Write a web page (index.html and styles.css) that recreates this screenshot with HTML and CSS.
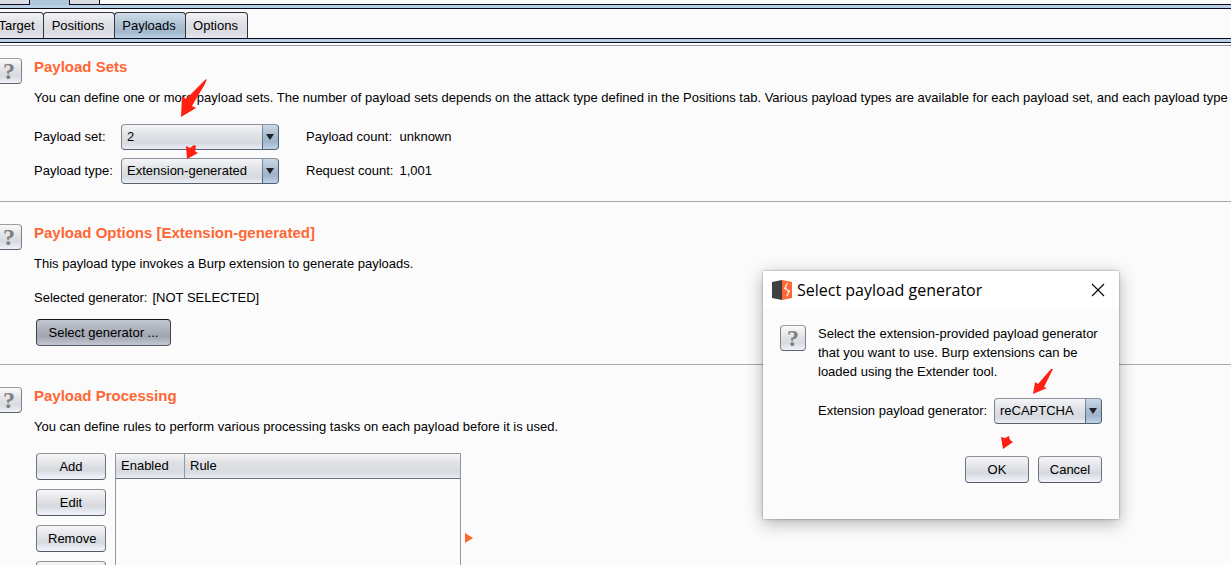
FILE: index.html
```
<!DOCTYPE html>
<html lang="en">
<head>
  <meta charset="UTF-8">
  <title>Intruder - Payloads</title>
  <link rel="stylesheet" href="styles.css">
</head>
<body>
  <div class="parent-tabs">
    <span class="parent-tab"></span>
    <span class="parent-tab wide active"></span>
    <span class="parent-tab"></span>
  </div>
  <div class="tab-bar"></div>

  <nav class="tabs">
    <button class="tab">Target</button>
    <button class="tab">Positions</button>
    <button class="tab active">Payloads</button>
    <button class="tab">Options</button>
  </nav>
  <div class="tab-bar"></div>

  <main>
    <section class="panel">
      <button class="help">?</button>
      <div class="panel-body">
        <h2>Payload Sets</h2>
        <p class="intro">You can define one or more payload sets. The number of payload sets depends on the attack type defined in the Positions tab. Various payload types are available for each payload set, and each payload type</p>
        <div class="form">
          <label for="payloadSet">Payload set:</label>
          <span class="combo"><select id="payloadSet"><option>1</option><option selected>2</option></select></span>
          <span class="count">Payload count:</span>
          <span>unknown</span>
          <label for="payloadType">Payload type:</label>
          <span class="combo"><select id="payloadType"><option>Extension-generated</option></select></span>
          <span class="count">Request count:</span>
          <span>1,001</span>
        </div>
      </div>
    </section>

    <section class="panel">
      <button class="help">?</button>
      <div class="panel-body">
        <h2>Payload Options [Extension-generated]</h2>
        <p class="intro">This payload type invokes a Burp extension to generate payloads.</p>
        <p class="selected"><span>Selected generator:</span><span>[NOT SELECTED]</span></p>
        <button class="btn pressed">Select generator ...</button>
      </div>
    </section>

    <section class="panel">
      <button class="help">?</button>
      <div class="panel-body">
        <h2>Payload Processing</h2>
        <p class="intro">You can define rules to perform various processing tasks on each payload before it is used.</p>
        <div class="rules">
          <div class="rule-buttons">
            <button class="btn">Add</button>
            <button class="btn">Edit</button>
            <button class="btn">Remove</button>
            <button class="btn" aria-label="Up"></button>
          </div>
          <div class="rule-box">
            <table class="rule-table">
              <thead>
                <tr><th class="enabled">Enabled</th><th>Rule</th></tr>
              </thead>
            </table>
          </div>
          <svg class="marker" width="8" height="10" viewBox="0 0 8 10"><path d="M0 0L8 5L0 10Z" fill="#ff6633"/></svg>
        </div>
      </div>
    </section>
  </main>

  <dialog class="dialog" open aria-labelledby="dialogTitle">
    <header class="dialog-title">
      <svg width="20" height="20" viewBox="0 0 20 20">
        <path d="M0 2L10 0V20L0 18Z" fill="#404040"/>
        <path d="M10 0L20 2V18L10 20Z" fill="#ff6633"/>
        <path d="M15.500 3L12.500 8.500L17.500 11L14.500 16.500" fill="none" stroke="#ffe8df" stroke-width="1.300"/>
        <path d="M12.500 8.500L15 8M17.500 11L15 11.500" fill="none" stroke="#ffe8df" stroke-width="1"/>
      </svg>
      <h1 id="dialogTitle">Select payload generator</h1>
      <button class="close" aria-label="Close">
        <svg width="12" height="12" viewBox="0 0 12 12"><path d="M0 0L12 12M12 0L0 12" stroke="#000" stroke-width="1.100"/></svg>
      </button>
    </header>
    <div class="dialog-body">
      <button class="help">?</button>
      <div class="dialog-content">
        <p>Select the extension-provided payload generator that you want to use. Burp extensions can be loaded using the Extender tool.</p>
        <div class="dialog-field">
          <label for="generator">Extension payload generator:</label>
          <span class="combo"><select id="generator"><option>reCAPTCHA</option></select></span>
        </div>
        <div class="dialog-actions">
          <button class="btn">OK</button>
          <button class="btn">Cancel</button>
        </div>
      </div>
    </div>
  </dialog>

  <!-- red pointer arrows -->
  <svg class="arrows" width="1231" height="565" viewBox="0 0 1231 565" fill="#ff2012">
    <path d="M205 80L207 79L205 84L192 106L196 108L181 117L182 96L186 99Z"/>
    <path d="M186 146L190 148L194 145L196 146L195 151L198 153L187 159Z"/>
    <path d="M1051 369L1053 369L1044 387L1047 388L1033 394L1035 382L1038 384Z"/>
    <path d="M1001 437L1005 438L1009 436L1010 440L1013 442L1003 449Z"/>
  </svg>
</body>
</html>
```

FILE: styles.css
```
* {
  box-sizing: border-box;
}
body {
  margin: 0;
  height: 100vh;
  overflow: hidden;
  position: relative;
  font-family: "Liberation Sans", Arial, sans-serif;
  font-size: 13px;
  line-height: 20px;
  color: #000;
  background: #fbfbfb;
}
button, select {
  font: inherit;
  color: inherit;
}
h1, h2, p {
  margin: 0;
}

/* tabs */
.parent-tabs {
  display: flex;
  height: 5px;
  margin-bottom: -1px;
}
.parent-tab {
  width: 30px;
  background: #dcdee3;
  border-right: 1px solid #0a0a1e;
  border-bottom: 1px solid #0a0a1e;
}
.parent-tab.wide {
  width: 40px;
}
.parent-tab.active {
  position: relative;
  border-bottom: 0;
  background: #b0c6da;
}
.tab-bar {
  height: 5px;
  border: solid #0a0a1e;
  border-width: 1px 0;
  background: #b8cfe5;
}
.tabs {
  display: flex;
  height: 29px;
  padding-top: 3px;
}
.tab {
  padding: 0 2px 0 0;
  width: 72px;
  margin-left: -1px;
  border: 1px solid #33343f;
  border-bottom: 0;
  border-radius: 4px 4px 0 0;
  background: linear-gradient(#f2f3f5, #dfe1e5 40%, #d9dbe1 80%, #e6e8ee);
}
.tab:first-child {
  width: 53px;
  margin-left: -9px;
}
.tab:last-child {
  width: 63px;
}
.tab.active {
  background: linear-gradient(#d0dde8, #aec2d4 45%, #a3b8cc 75%, #b8cfe5);
}

/* panels */
main {
  margin-top: 2px;
  border-top: 1px solid #9297a1;
}
.panel {
  display: flex;
  gap: 12px;
  padding: 21px 0 18px;
  border-bottom: 1px solid #a3a8b0;
}
.panel:first-child {
  padding: 11px 0 17px;
}
.panel:last-child {
  border-bottom: 0;
}
.help {
  flex: none;
  width: 26px;
  height: 26px;
  margin-top: 1px;
  padding: 0;
  border: 1px solid #85888f;
  border-color: #9a9da3 #7d8087 #5f636b;
  border-radius: 4px;
  background: linear-gradient(#fafafa, #e0e2e5 45%, #d7dae0 70%, #f0f2f8);
  font-family: "Liberation Serif", serif;
  font-size: 24px;
  font-weight: bold;
  line-height: 24px;
  color: #808080;
}
.panel > .help {
  margin-left: -4px;
}
.panel-body {
  flex: 1;
  min-width: 0;
}
h2 {
  font-size: 15px;
  color: #ff6633;
}
.intro {
  margin-top: 11px;
  white-space: nowrap;
}
.form {
  display: grid;
  grid-template-columns: 79px 158px auto 1fr;
  column-gap: 8px;
  row-gap: 8px;
  align-items: center;
  margin-top: 16px;
}
.count {
  margin: 0 -2px 0 19px;
}
.selected {
  display: flex;
  gap: 5px;
  margin-top: 14px;
}

/* controls */
.combo {
  display: block;
  position: relative;
  height: 26px;
}
.combo select {
  appearance: none;
  width: 100%;
  height: 100%;
  padding: 0 20px 0 5px;
  border: 1px solid #6d7480;
  border-color: #8c919b #4c5f73 #55606e #7c818b;
  border-radius: 4px;
  background:
    linear-gradient(#7c92a6, #4c6378) right 15px top / 1px 100% no-repeat,
    linear-gradient(#ccd9e5, #a5bacd 50%, #a0b5c9 70%, #bdd3e8) right / 15px 100% no-repeat,
    linear-gradient(#f4f5f6, #dfe1e5 45%, #d6d9df 75%, #eceef6);
}
.combo::after {
  content: "";
  position: absolute;
  right: 5px;
  top: 10px;
  border: 4px solid transparent;
  border-top: 6px solid #1c2228;
  border-bottom: 0;
  pointer-events: none;
}
.btn {
  height: 27px;
  padding: 0 11px;
  border: 1px solid #6f737b;
  border-color: #8e929a #6f737b #555962;
  border-radius: 4px;
  background: linear-gradient(#f7f7f8, #e1e3e6 40%, #d6d9df 65%, #f3f5fc);
}
.btn.pressed {
  display: block;
  width: 135px;
  margin: 11px 0 0 2px;
  border-color: #15161c #3f424c #575b66;
  background: linear-gradient(#c3c7d0, #abafba 45%, #a1a5b0 65%, #c3c8d5);
}

/* processing rules */
.rules {
  display: flex;
  align-items: flex-start;
  margin: 16px 0 0 2px;
}
.rule-buttons {
  display: flex;
  flex-direction: column;
  gap: 9px;
  width: 70px;
  margin-right: 9px;
}
.rule-box {
  width: 346px;
  height: 171px;
  border: 1px solid #9297a1;
}
.rule-table {
  width: 100%;
  border-collapse: separate;
  border-spacing: 0;
}
.rule-table th {
  height: 25px;
  padding: 0 5px 1px;
  border-bottom: 1px solid #6d7079;
  font-weight: normal;
  text-align: left;
  background: linear-gradient(#f6f6f7, #dfe1e4 35%, #d7dae0 75%, #e9ecf5);
}
.rule-table .enabled {
  width: 69px;
  border-right: 1px solid #9297a1;
}
.marker {
  margin: 80px 0 0 4px;
}

/* generator dialog */
.dialog {
  position: absolute;
  left: 763px;
  top: 271px;
  width: 356px;
  margin: 0;
  padding: 0;
  border: 0;
  color: #000;
  background: #fbfbfb;
  box-shadow: 0 0 2px rgba(0, 0, 0, 0.4), 0 4px 16px rgba(0, 0, 0, 0.3);
}
.dialog-title {
  display: flex;
  align-items: center;
  gap: 5px;
  height: 38px;
  padding: 0 15px 0 9px;
  background: #fff;
}
.dialog-title h1 {
  flex: 1;
  font-family: "Open Sans", sans-serif;
  font-size: 16px;
  font-weight: normal;
}
.close {
  display: flex;
  padding: 0;
  border: 0;
  background: none;
}
.close svg {
  overflow: visible;
}
.dialog-body {
  display: flex;
  gap: 12px;
  padding: 15px 17px 36px;
}
.dialog-content {
  flex: 1;
}
.dialog-content p {
  line-height: 19px;
}
.dialog-field {
  display: flex;
  justify-content: space-between;
  align-items: center;
  margin-top: 17px;
}
.dialog-field .combo {
  width: 108px;
}
.dialog-actions {
  display: flex;
  justify-content: flex-end;
  gap: 9px;
  margin-top: 32px;
}
.dialog-actions .btn {
  width: 64px;
  padding: 0;
}

.arrows {
  position: absolute;
  left: 0;
  top: 0;
  pointer-events: none;
}
```
